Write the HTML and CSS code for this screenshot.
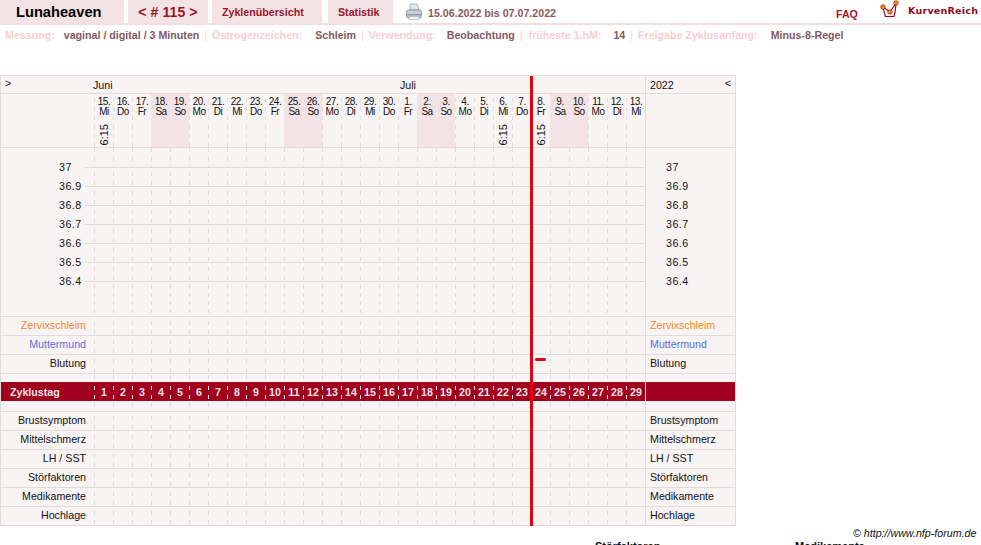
FILE: index.html
```html
<!DOCTYPE html>
<html lang="de">
<head>
<meta charset="utf-8">
<title>Lunaheaven</title>
<link rel="stylesheet" href="styles.css">
</head>
<body>
<header class="topbar">
  <div class="tab tab-name">Lunaheaven</div>
  <div class="tab tab-nr">&lt; # 115 &gt;</div>
  <div class="tab tab-link tab-over">Zyklenübersicht</div>
  <div class="tab tab-link tab-stat">Statistik</div>
  <svg class="printer" width="18" height="18" viewBox="0 0 18 18"><path d="M5 1h7l2 6H5z" fill="#dfe6ee" stroke="#8f9aa6" stroke-width=".7"/><path d="M1.500 9q0-2 2-2h11q2 0 2 2v4q0 2-2 2h-11q-2 0-2-2z" fill="#c9cdd2" stroke="#7d838a" stroke-width=".7"/><path d="M2 11h14v1.500H2z" fill="#9a9fa6"/><path d="M4 13.500h10v3H4z" fill="#f2f3f5" stroke="#9a9fa6" stroke-width=".5"/></svg>
  <div class="dates">15.06.2022 bis 07.07.2022</div>
  <div class="faq">FAQ</div>
  <svg class="logo" width="22" height="18" viewBox="0 0 22 18"><path d="M3 7q1 5 2.500 9.500H14q1.500-5 2-13" fill="none" stroke="#a00020" stroke-width="1.200"/><path d="M3 7l7 5 6-9" fill="none" stroke="#a00020" stroke-width="1.200"/><circle cx="3" cy="7" r="2.300" fill="#f09010" stroke="#a00020" stroke-width=".6"/><circle cx="10" cy="12" r="2.300" fill="#f09010" stroke="#a00020" stroke-width=".6"/><circle cx="16" cy="3" r="2.300" fill="#f09010" stroke="#a00020" stroke-width=".6"/></svg>
  <div class="brand">KurvenReich</div>
</header>
<div class="info">
  <span class="k">Messung:</span><span class="v v1">vaginal / digital / 3 Minuten</span><span class="s">|</span><span class="k">Östrogenzeichen:</span><span class="v v2">Schleim</span><span class="s">|</span><span class="k">Verwendung:</span><span class="v v3">Beobachtung</span><span class="s">|</span><span class="k k4">früheste 1.hM:</span><span class="v v4">14</span><span class="s">|</span><span class="k">Freigabe Zyklusanfang:</span><span class="v v5">Minus-8-Regel</span>
</div>

<div class="chart-wrap">
  <div class="row row-month">
    <div class="lab lab-arrow">&gt;</div>
    <div class="days months"><span class="m-juni">Juni</span><span class="m-juli">Juli</span></div>
    <div class="rlab rlab-year"><span>2022</span><span class="arrow-r">&lt;</span></div>
  </div>
  <div class="row row-dates">
    <div class="lab"></div>
    <div class="days">
      <div class="d"><b>15.<br>Mi</b><i>6:15</i></div><div class="d"><b>16.<br>Do</b></div><div class="d"><b>17.<br>Fr</b></div><div class="d we"><b>18.<br>Sa</b></div><div class="d we"><b>19.<br>So</b></div><div class="d"><b>20.<br>Mo</b></div><div class="d"><b>21.<br>Di</b></div><div class="d"><b>22.<br>Mi</b></div><div class="d"><b>23.<br>Do</b></div><div class="d"><b>24.<br>Fr</b></div><div class="d we"><b>25.<br>Sa</b></div><div class="d we"><b>26.<br>So</b></div><div class="d"><b>27.<br>Mo</b></div><div class="d"><b>28.<br>Di</b></div><div class="d"><b>29.<br>Mi</b></div><div class="d"><b>30.<br>Do</b></div><div class="d"><b>1.<br>Fr</b></div><div class="d we"><b>2.<br>Sa</b></div><div class="d we"><b>3.<br>So</b></div><div class="d"><b>4.<br>Mo</b></div><div class="d"><b>5.<br>Di</b></div><div class="d"><b>6.<br>Mi</b><i>6:15</i></div><div class="d"><b>7.<br>Do</b></div><div class="d"><b>8.<br>Fr</b><i>6:15</i></div><div class="d we"><b>9.<br>Sa</b></div><div class="d we"><b>10.<br>So</b></div><div class="d"><b>11.<br>Mo</b></div><div class="d"><b>12.<br>Di</b></div><div class="d"><b>13.<br>Mi</b></div>
    </div>
    <div class="rlab"></div>
  </div>
  <div class="row row-temp">
    <div class="lab temps"><span>37</span><span>36.9</span><span>36.8</span><span>36.7</span><span>36.6</span><span>36.5</span><span>36.4</span></div>
    <div class="days grid-lines"></div>
    <div class="rlab temps"><span>37</span><span>36.9</span><span>36.8</span><span>36.7</span><span>36.6</span><span>36.5</span><span>36.4</span></div>
  </div>
  <div class="row"><div class="lab orange">Zervixschleim</div><div class="days"></div><div class="rlab orange">Zervixschleim</div></div>
  <div class="row"><div class="lab blue">Muttermund</div><div class="days"></div><div class="rlab blue">Muttermund</div></div>
  <div class="row"><div class="lab">Blutung</div><div class="days"><span class="bleed"></span></div><div class="rlab">Blutung</div></div>
  <div class="row row-spacer"><div class="lab"></div><div class="days"></div><div class="rlab"></div></div>
  <div class="row row-cycle">
    <div class="lab">Zyklustag</div>
    <div class="days">
      <div class="c">1</div><div class="c">2</div><div class="c">3</div><div class="c">4</div><div class="c">5</div><div class="c">6</div><div class="c">7</div><div class="c">8</div><div class="c">9</div><div class="c">10</div><div class="c">11</div><div class="c">12</div><div class="c">13</div><div class="c">14</div><div class="c">15</div><div class="c">16</div><div class="c">17</div><div class="c">18</div><div class="c">19</div><div class="c">20</div><div class="c">21</div><div class="c">22</div><div class="c">23</div><div class="c">24</div><div class="c">25</div><div class="c">26</div><div class="c">27</div><div class="c">28</div><div class="c">29</div>
    </div>
    <div class="rlab"></div>
  </div>
  <div class="row row-spacer2"><div class="lab"></div><div class="days"></div><div class="rlab"></div></div>
  <div class="row"><div class="lab">Brustsymptom</div><div class="days"></div><div class="rlab">Brustsymptom</div></div>
  <div class="row"><div class="lab">Mittelschmerz</div><div class="days"></div><div class="rlab">Mittelschmerz</div></div>
  <div class="row"><div class="lab">LH / SST</div><div class="days"></div><div class="rlab">LH / SST</div></div>
  <div class="row"><div class="lab">Störfaktoren</div><div class="days"></div><div class="rlab">Störfaktoren</div></div>
  <div class="row"><div class="lab">Medikamente</div><div class="days"></div><div class="rlab">Medikamente</div></div>
  <div class="row"><div class="lab">Hochlage</div><div class="days"></div><div class="rlab">Hochlage</div></div>
  <div class="redline"></div>
</div>
<div class="copy">© http://www.nfp-forum.de</div>
<div class="legend"><span class="lg1">Störfaktoren</span><span class="lg2">Medikamente</span></div>
</body>
</html>
```
FILE: styles.css
```css
html, body { margin: 0; padding: 0; background: #fff; overflow: hidden; height: 545px; }
body { font-family: "Liberation Sans", Arial, sans-serif; font-size: 10.67px; color: #111; }

.topbar { display: flex; align-items: flex-start; height: 25px; box-sizing: border-box; border-bottom: 2px solid #f3dfe1; }
.tab { height: 23px; background: #f3e3e5; display: flex; align-items: center; font-weight: bold; color: #9b1527; white-space: nowrap; }
.tab-name { width: 124px; color: #000; font-size: 14.67px; margin-right: 4px; padding-left: 16px; box-sizing: border-box; }
.tab-nr { width: 80px; font-size: 14px; letter-spacing: .1px; margin-right: 4px; justify-content: center; }
.tab-link { padding-left: 10px; box-sizing: border-box; }
.tab-over { width: 110px; margin-right: 6px; }
.tab-stat { width: 65px; }
.printer { margin: 3px 0 0 12px; }
.dates { margin: 7px 0 0 5px; font-weight: bold; color: #8a5a60; width: 408px; white-space: nowrap; }
.faq { margin-top: 8px; font-weight: bold; color: #a01628; width: 45px; }
.logo { margin-left: -1px; }
.brand { margin: 5px 0 0 6px; font-family: "DejaVu Sans", sans-serif; font-weight: bold; font-size: 9.500px; color: #8c0a1e; letter-spacing: .25px; white-space: nowrap; }

.info { height: 50px; padding-top: 4px; box-sizing: border-box; font-weight: bold; white-space: nowrap; line-height: 13px; }
.k { color: #f6cfd2; margin-left: 5px; }
.k4 { margin-left: 6px; }
.v { color: #84595f; }
.v1 { margin-left: 9px; }
.v2 { margin-left: 13px; }
.v3 { margin-left: 11px; }
.v4 { margin-left: 12px; }
.v5 { margin-left: 13px; }
.s { color: #f6cfd2; margin-left: 5px; font-weight: normal; }

.chart-wrap { position: relative; width: 736px; border-top: 1px solid #e0dcdc; }
.row { display: flex; height: 19px; box-sizing: border-box; border-bottom: 1px solid #e0dcdc; background: #f9f4f4; }
.lab { width: 94px; flex: none; box-sizing: border-box; border-left: 1px solid #e0dcdc; text-align: right; padding-right: 8px; line-height: 16px; white-space: nowrap; }
.rlab { width: 91px; flex: none; box-sizing: border-box; border-left: 1px solid #e0dcdc; border-right: 1px solid #e0dcdc; padding-left: 4px; line-height: 16px; white-space: nowrap; }
.days { width: 551px; flex: none; display: flex; position: relative; }
.days::before { content: ""; position: absolute; inset: 0; background-image: repeating-linear-gradient(to bottom, transparent 0 4px, #e0dcdc 4px 8px, transparent 8px 9px); -webkit-mask-image: repeating-linear-gradient(to right, #000 0 1px, transparent 1px 19px); mask-image: repeating-linear-gradient(to right, #000 0 1px, transparent 1px 19px); pointer-events: none; }
.orange { color: #f58a1f; }
.blue { color: #5a6fd6; }

.row-month { height: 18px; }
.row-month .lab, .row-month .rlab { line-height: 18px; }
.row-month .days::before { display: none; }
.lab-arrow { text-align: left; padding-left: 4px; line-height: 14px !important; }
.months { line-height: 18px; }
.m-juni { position: absolute; left: -1px; }
.m-juli { position: absolute; left: 306px; }
.rlab-year { display: flex; justify-content: space-between; padding-right: 4px; }
.arrow-r { line-height: 14px; }

.row-dates { height: 54px; }
.d { width: 19px; flex: none; height: 53px; text-align: center; font-size: 10px; line-height: 10px; padding: 3px 0 0 1px; box-sizing: border-box; position: relative; white-space: nowrap; }
.d b { font-weight: normal; letter-spacing: -.5px; display: block; }
.d i { font-style: normal; font-size: 11px; position: absolute; left: 50%; bottom: 2px; writing-mode: vertical-rl; transform: translateX(-50%) rotate(180deg); line-height: 11px; }
.we { background: #f3e3e5; }

.row-temp { height: 169px; }
.temps { display: flex; flex-direction: column; padding-top: 10px; }
.temps span { height: 19px; line-height: 18px; letter-spacing: .5px; position: relative; }
.lab.temps { align-items: flex-start; padding-left: 58px; padding-right: 0; }
.lab.temps span::after { content: ""; position: absolute; left: 26px; top: 9px; width: 9px; height: 1px; background: #e0dcdc; }
.rlab.temps { padding-left: 20px; }
.grid-lines { background-image: repeating-linear-gradient(to bottom, #e0dcdc 0 1px, transparent 1px 19px); background-size: 100% 115px; background-position: 0 19px; background-repeat: no-repeat; }
.grid-lines::before {
  background-image:
    repeating-linear-gradient(to bottom, #e0dcdc 0 4px, transparent 4px 9px),
    repeating-linear-gradient(to bottom, transparent 0 5px, #e0dcdc 5px 9px, transparent 9px 14px, #e0dcdc 14px 18px, transparent 18px 19px),
    repeating-linear-gradient(to bottom, transparent 0 4px, #e0dcdc 4px 8px);
  background-size: 100% 19px, 100% 114px, 100% 35px;
  background-position: 0 0, 0 19px, 0 133px;
  background-repeat: no-repeat;
}

.row-spacer { height: 8px; border-bottom: 0; }
.row-spacer .days::before { background-position: 0 -3px; }
.row-spacer2 { height: 11px; }
.row-spacer2 .days::before { background-position: 0 -2px; }
.row-cycle { height: 19px; background: #a0001e; border-bottom: 0; }
.row-cycle .lab { color: #f3e3e5; font-weight: bold; text-align: left; padding-left: 9px; line-height: 20px; }
.row-cycle .days::before { background-image: repeating-linear-gradient(to bottom, transparent 0 4px, #f3e3e5 4px 8px, transparent 8px 9px); }
.c { width: 19px; flex: none; text-align: center; color: #f3e3e5; font-weight: bold; line-height: 20px; padding-left: 1px; box-sizing: border-box; }
.bleed { position: absolute; left: 441px; top: 3px; width: 11px; height: 3px; border-radius: 2px; background: #e00010; }
.redline { position: absolute; left: 530px; top: 0; bottom: 0; width: 3px; background: #e00010; }

.copy { position: absolute; left: 853px; top: 527px; font-style: italic; color: #111; white-space: nowrap; }
.legend { position: absolute; top: 540px; left: 595px; font-weight: bold; font-size: 11px; white-space: nowrap; }
.lg2 { position: absolute; left: 200px; }
```
